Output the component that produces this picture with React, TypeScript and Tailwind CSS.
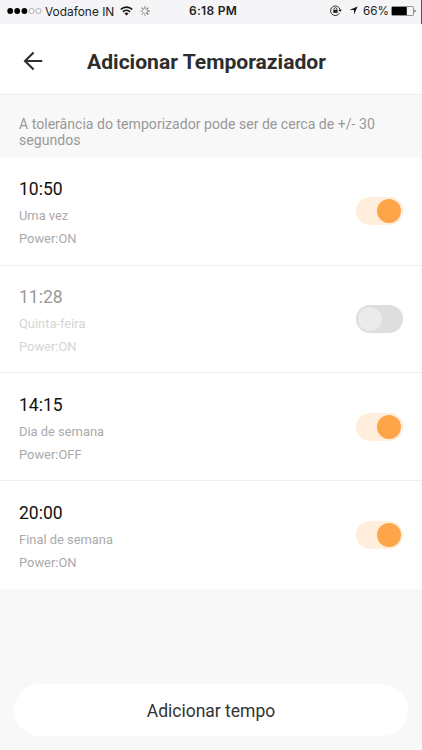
import React, { useState } from 'react';

interface Timer {
    id: number;
    time: string;
    repeat: string;
    power: 'ON' | 'OFF';
    enabled: boolean;
}

const initialTimers: Timer[] = [
    { id: 1, time: '10:50', repeat: 'Uma vez', power: 'ON', enabled: true },
    { id: 2, time: '11:28', repeat: 'Quinta-feira', power: 'ON', enabled: false },
    { id: 3, time: '14:15', repeat: 'Dia de semana', power: 'OFF', enabled: true },
    { id: 4, time: '20:00', repeat: 'Final de semana', power: 'ON', enabled: true },
];

const SignalIcon = () => (
    <svg width="36" height="8" viewBox="0 0 36 8" fill="none">
        <circle cx="3.2" cy="4" r="2.9" fill="#000" />
        <circle cx="10.2" cy="4" r="2.9" fill="#000" />
        <circle cx="17.4" cy="4" r="2.9" fill="#000" />
        <circle cx="24.5" cy="4" r="2.6" stroke="#999" strokeWidth="0.7" />
        <circle cx="31.5" cy="4" r="2.6" stroke="#999" strokeWidth="0.7" />
    </svg>
);

const WifiIcon = () => (
    <svg width="13" height="10" viewBox="0 0 13 10" fill="none" stroke="#111">
        <path d="M0.8 3.5a8.2 8.2 0 0 1 11.4 0" strokeWidth="1.7" />
        <path d="M2.9 5.8a5.2 5.2 0 0 1 7.2 0" strokeWidth="1.6" />
        <path d="M6.5 9.6L4.4 7.5a3 3 0 0 1 4.2 0z" fill="#111" stroke="none" />
    </svg>
);

const SpinnerIcon = () => (
    <svg width="10" height="10" viewBox="0 0 10 10" fill="none" strokeWidth="1.1" strokeLinecap="round">
        <path d="M5 0.6v2M8.1 1.9L6.7 3.3M1.9 1.9l1.4 1.4" stroke="#777" />
        <path d="M9.4 5h-2M8.1 8.1L6.7 6.7" stroke="#555" />
        <path d="M5 9.4v-2M1.9 8.1l1.4-1.4M0.6 5h2" stroke="#999" />
    </svg>
);

const RotationLockIcon = () => (
    <svg width="12" height="11" viewBox="0 0 12 11" fill="none" stroke="#222">
        <path d="M9.6 8a4.8 4.8 0 1 1 .5-3" strokeWidth="0.9" />
        <path d="M8.4 4.7h3.4l-1.7 2.2z" fill="#222" stroke="none" />
        <rect x="3.3" y="4.9" width="4.3" height="3" fill="#222" stroke="none" />
        <path d="M4.1 5V4a1.35 1.35 0 0 1 2.7 0v1" strokeWidth="0.8" />
    </svg>
);

const LocationIcon = () => (
    <svg width="9" height="9" viewBox="0 0 9 9" fill="#111">
        <path d="M8.6 0.4L5 8.6V4.1H0.4z" />
    </svg>
);

const BatteryIcon = () => (
    <svg width="26" height="10" viewBox="0 0 26 10" fill="none">
        <rect x="0.5" y="0.5" width="22" height="9" rx="1" stroke="#777" strokeWidth="0.8" />
        <rect x="1" y="1" width="14.8" height="8" fill="#000" />
        <path d="M23.6 3.4c1.2.3 1.2 2.9 0 3.2z" fill="#222" />
    </svg>
);

const BackIcon = () => (
    <svg width="20" height="20" viewBox="0 0 20 20" fill="none" stroke="#2d2d2d" strokeWidth="2.1">
        <path d="M10.6 1.4L2 10l8.6 8.6M2 10h17.2" />
    </svg>
);

const StatusBar = () => (
    <div className="relative flex h-6 items-center justify-between bg-[#f5f5f7] pb-[2px] pl-[7px] pr-[5px] font-['Inter'] text-[#222]">
        <div className="flex items-center">
            <SignalIcon />
            <span className="ml-[2px] mr-[5px] w-[70px] pt-px whitespace-nowrap text-[11.9px]">Vodafone IN</span>
            <WifiIcon />
            <span className="ml-[7px]"><SpinnerIcon /></span>
        </div>
        <span className="absolute left-[189px] text-[12px] font-semibold tracking-[0.3px] whitespace-nowrap">6:18 PM</span>
        <div className="flex items-center">
            <RotationLockIcon />
            <span className="ml-[7px] mr-[5px]"><LocationIcon /></span>
            <span className="mr-[3px] w-[25px] pt-px text-[11.7px] whitespace-nowrap">66%</span>
            <BatteryIcon />
        </div>
        <span className="absolute right-0 top-0 h-6 w-px bg-[#555]" />
    </div>
);

interface ToggleProps {
    checked: boolean;
    onChange: () => void;
}

const Toggle: React.FC<ToggleProps> = ({ checked, onChange }) => (
    <button
        role="switch"
        aria-checked={checked}
        onClick={onChange}
        className={`flex h-7 w-[47px] items-center rounded-full px-[2px] ${checked ? 'justify-end bg-[#ffeedc]' : 'justify-start bg-[#dedede]'}`}
    >
        <span className={`h-6 w-6 rounded-full ${checked ? 'bg-[#fda548]' : 'bg-[#ebebeb]'}`} />
    </button>
);

export default function App() {
    const [timers, setTimers] = useState(initialTimers);

    const toggleTimer = (id: number) => {
        setTimers(timers.map(t => (t.id === id ? { ...t, enabled: !t.enabled } : t)));
    };

    return (
        <div className="flex h-[750px] w-[422px] flex-col bg-[#f8f8f8] font-['Roboto',sans-serif]">
            <StatusBar />

            <header className="flex h-[70px] items-center bg-white pl-[23px] pb-px">
                <button className="mt-[5px]"><BackIcon /></button>
                <h1 className="ml-[44px] mt-[7px] text-[21.1px] font-bold leading-6 whitespace-nowrap text-[#2d2d2d]">Adicionar Temporaziador</h1>
            </header>

            <p className="h-16 border-t border-[#eeeeee] pl-[19px] pr-10 pt-[21px] text-[14.1px] leading-4 text-[#999]">
                A tolerância do temporizador pode ser de cerca de +/- 30 segundos
            </p>

            <ul>
                {timers.map(timer => (
                    <li key={timer.id} className="flex h-[107.7px] items-center justify-between border-b border-[#efefef] bg-white pl-[19px] pr-[19px] last:border-b-0">
                        <div className="flex flex-col pt-[5px]">
                            <span className={`text-[17.5px] leading-6 ${timer.enabled ? 'text-[#111]' : 'text-[#999]'}`}>{timer.time}</span>
                            <span className={`mt-[3px] text-[12.9px] leading-[23px] ${timer.enabled ? 'text-[#aaa]' : 'text-[#d5d5d5]'}`}>{timer.repeat}</span>
                            <span className={`text-[12.9px] leading-[23px] ${timer.enabled ? 'text-[#aaa]' : 'text-[#d5d5d5]'}`}>Power:{timer.power}</span>
                        </div>
                        <Toggle checked={timer.enabled} onChange={() => toggleTimer(timer.id)} />
                    </li>
                ))}
            </ul>

            <button className="mx-[14px] mt-auto mb-[14px] h-[52px] rounded-full bg-white pt-[2px] text-[17.5px] text-[#333]">
                Adicionar tempo
            </button>
        </div>
    );
}
